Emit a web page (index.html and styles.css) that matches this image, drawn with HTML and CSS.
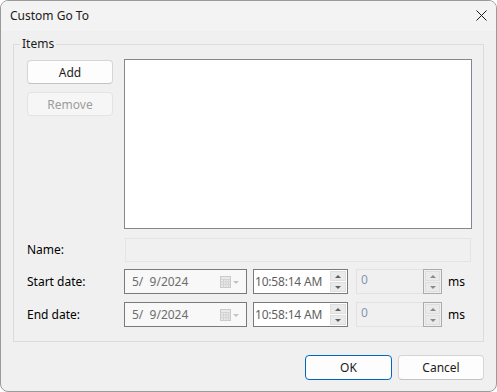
FILE: index.html
```html
<!DOCTYPE html>
<html lang="en">

<head>
  <meta charset="UTF-8">
  <title>Custom Go To</title>
  <link rel="stylesheet" href="styles.css">
</head>

<body>
  <div class="window">
    <div class="titlebar">
      <span class="title">Custom Go To</span>
      <svg class="close" width="11" height="11" viewBox="0 0 11 11">
        <path d="M0.5 0.5 L10.5 10.5 M10.5 0.5 L0.5 10.5" stroke="#1a1a1a" stroke-width="1" fill="none" />
      </svg>
    </div>

    <div class="content">
      <fieldset class="group">
        <legend>Items</legend>

        <div class="items">
          <div class="item-buttons">
            <button class="btn">Add</button>
            <button class="btn" disabled>Remove</button>
          </div>
          <div class="listbox"></div>
        </div>

        <div class="form-row name-row">
          <label>Name:</label>
          <div class="name-box"></div>
        </div>

        <div class="form-row date-row">
          <label>Start date:</label>
          <div class="date">
            <span class="date-text">5/  9/2024</span>
            <svg class="cal" width="20" height="12" viewBox="0 0 20 12">
              <rect x="0.5" y="0.5" width="10" height="11" fill="#e9e9e9" stroke="#cacaca" />
              <path d="M0.5 3.5 H10.5 M0.5 6 H10.5 M0.5 8.5 H10.5 M3.5 3.5 V11.5 M6 3.5 V11.5 M8.5 3.5 V11.5" stroke="#d4d4d4" fill="none" />
              <path d="M13 5 L19 5 L16 8 Z" fill="#c4c4c4" />
            </svg>
          </div>
          <div class="time">
            <span class="time-text">10:58:14 AM</span>
            <div class="spin">
              <div class="spin-half"><span class="arrow-up"></span></div>
              <div class="spin-half"><span class="arrow-down"></span></div>
            </div>
          </div>
          <div class="ms">
            <div class="ms-text">0</div>
            <div class="ms-spin">
              <div class="spin-half"><span class="arrow-up"></span></div>
              <div class="spin-half"><span class="arrow-down"></span></div>
            </div>
          </div>
          <span class="unit">ms</span>
        </div>

        <div class="form-row date-row">
          <label>End date:</label>
          <div class="date">
            <span class="date-text">5/  9/2024</span>
            <svg class="cal" width="20" height="12" viewBox="0 0 20 12">
              <rect x="0.5" y="0.5" width="10" height="11" fill="#e9e9e9" stroke="#cacaca" />
              <path d="M0.5 3.5 H10.5 M0.5 6 H10.5 M0.5 8.5 H10.5 M3.5 3.5 V11.5 M6 3.5 V11.5 M8.5 3.5 V11.5" stroke="#d4d4d4" fill="none" />
              <path d="M13 5 L19 5 L16 8 Z" fill="#c4c4c4" />
            </svg>
          </div>
          <div class="time">
            <span class="time-text">10:58:14 AM</span>
            <div class="spin">
              <div class="spin-half"><span class="arrow-up"></span></div>
              <div class="spin-half"><span class="arrow-down"></span></div>
            </div>
          </div>
          <div class="ms">
            <div class="ms-text">0</div>
            <div class="ms-spin">
              <div class="spin-half"><span class="arrow-up"></span></div>
              <div class="spin-half"><span class="arrow-down"></span></div>
            </div>
          </div>
          <span class="unit">ms</span>
        </div>
      </fieldset>

      <div class="footer">
        <button class="btn btn-ok">OK</button>
        <button class="btn btn-cancel">Cancel</button>
      </div>
    </div>
  </div>
</body>

</html>
```

FILE: styles.css
```css
body {
  margin: 0;
  padding: 0;
  background-color: #ffffff;
  color: #1b1b1b;
  font-family: "Segoe UI", "Noto Sans", sans-serif;
  font-size: 12px;
  line-height: 16px;
}

.window {
  box-sizing: border-box;
  width: 497px;
  height: 392px;
  border: 1px solid #9a9a9a;
  border-radius: 8px;
  background-color: #f0f0f0;
  overflow: hidden;
}

.titlebar {
  height: 30px;
  padding: 0 9px;
  display: flex;
  align-items: center;
  justify-content: space-between;
  background-color: #f3f3f3;
}

.title {
  color: #1a1a1a;
}

.close {
  display: block;
  margin-top: -1px;
}

.content {
  padding: 5px 12px 0 12px;
}

/* group box */
.group {
  margin: 0;
  min-width: 0;
  border: 1px solid #dcdcdc;
  padding: 7px 11px 14px 13px;
}

.group legend {
  margin-left: -7px;
  padding: 0 2px;
  line-height: 16px;
}

.items {
  display: flex;
  gap: 11px;
}

.item-buttons {
  width: 86px;
  padding-top: 1px;
  display: flex;
  flex-direction: column;
  gap: 8px;
}

.listbox {
  box-sizing: border-box;
  width: 348px;
  height: 170px;
  border: 1px solid #828790;
  background-color: #ffffff;
}

/* buttons */
.btn {
  box-sizing: border-box;
  height: 24px;
  padding: 0;
  font-family: inherit;
  font-size: 12px;
  color: #1b1b1b;
  background-color: #fdfdfd;
  border: 1px solid #d5d5d5;
  border-bottom-color: #c2c2c2;
  border-radius: 4px;
}

.btn:disabled {
  color: #9d9d9d;
  background-color: #f6f6f6;
  border-color: #e3e3e3;
}

.btn-ok {
  width: 87px;
  height: 25px;
  border-color: #0067c0;
}

.btn-cancel {
  width: 86px;
  height: 25px;
}

/* form rows */
.form-row {
  display: flex;
  align-items: center;
}

.form-row label {
  width: 86px;
  margin-right: 11px;
  color: #000000;
}

.name-row {
  margin-top: 9px;
}

.date-row {
  margin-top: 7px;
  height: 25px;
}

.date-row + .date-row {
  margin-top: 8px;
}

.name-box {
  box-sizing: border-box;
  width: 346px;
  height: 24px;
  margin-left: 1px;
  border: 1px solid #e4e4e4;
  background-color: #f0f0f0;
}

.date {
  box-sizing: border-box;
  width: 123px;
  height: 25px;
  padding: 0 6px 0 7px;
  display: flex;
  align-items: center;
  border: 1px solid #7a7a7a;
  background-color: #f8f8f8;
  color: #6d6d6d;
}

.date-text {
  white-space: pre;
}

.cal {
  display: block;
  margin-left: auto;
  margin-top: 1px;
}

.time {
  box-sizing: border-box;
  width: 95px;
  height: 25px;
  margin-left: 6px;
  padding: 1px 1px 1px 1px;
  display: flex;
  align-items: stretch;
  border: 1px solid #7a7a7a;
  background-color: #ffffff;
  color: #5f5f5f;
}

.time-text {
  flex: 1;
  align-self: center;
  letter-spacing: -0.2px;
}

.spin {
  width: 16px;
  display: flex;
  flex-direction: column;
  gap: 1px;
}

.spin-half {
  flex: 1;
  display: flex;
  align-items: center;
  justify-content: center;
  background-color: #eaeaea;
  border: 1px solid #dedede;
}

.arrow-up {
  width: 0;
  height: 0;
  border-left: 3px solid transparent;
  border-right: 3px solid transparent;
  border-bottom: 3px solid #606060;
}

.arrow-down {
  width: 0;
  height: 0;
  border-left: 3px solid transparent;
  border-right: 3px solid transparent;
  border-top: 3px solid #606060;
}

.ms {
  height: 25px;
  margin-left: 8px;
  display: flex;
}

.ms-text {
  box-sizing: border-box;
  width: 67px;
  padding: 2px 0 0 4px;
  border: 1px solid #e2e2e2;
  border-right: none;
  color: #8797ab;
}

.ms-spin {
  box-sizing: border-box;
  width: 19px;
  padding: 1px;
  display: flex;
  flex-direction: column;
  gap: 1px;
  border: 1px solid #ababab;
}

.ms-spin .arrow-up {
  border-bottom-color: #8a8a8a;
}

.ms-spin .arrow-down {
  border-top-color: #8a8a8a;
}

.unit {
  margin-left: 6px;
  color: #000000;
}

.footer {
  margin-top: 13px;
  display: flex;
  justify-content: flex-end;
  gap: 6px;
}
```
